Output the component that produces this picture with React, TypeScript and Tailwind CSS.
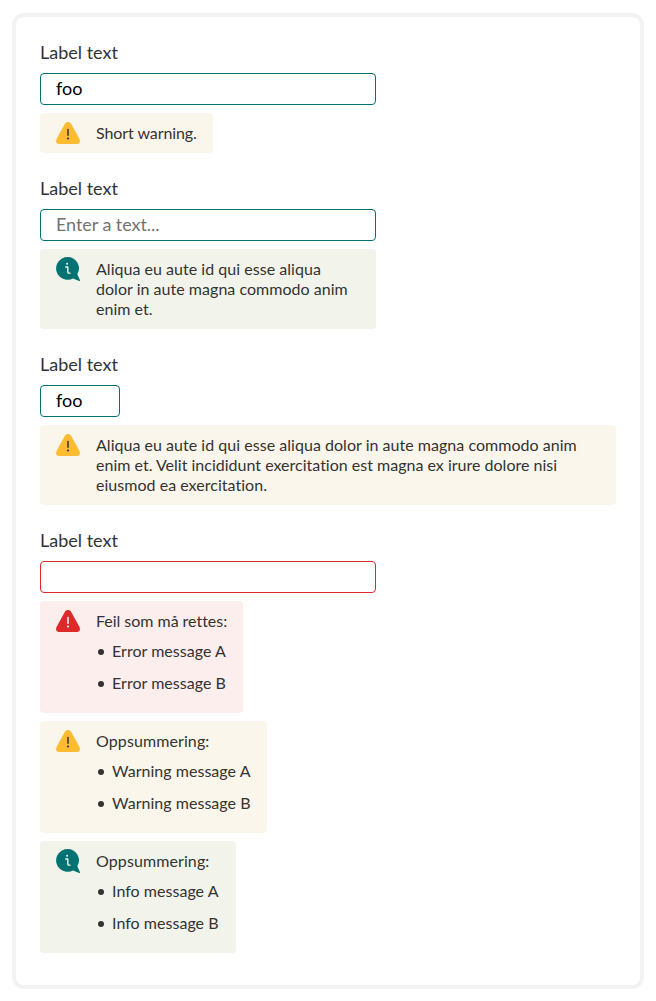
import type { ReactNode } from "react";

type Kind = "info" | "warning" | "error";

const boxColors: Record<Kind, string> = {
  info: "bg-[#f2f3eb]",
  warning: "bg-[#fbf6ec]",
  error: "bg-[#fdeeee]",
};

function TriangleIcon({ kind }: { kind: Kind }) {
  const error = kind === "error";
  const mark = error ? "#ffffff" : "#333333";
  return (
    <svg width="24" height="24" viewBox="0 0 24 24" className="shrink-0" aria-hidden="true">
      <path
        d="M8.8 2.9C10.3.4 13.7.4 15.2 2.9L23.5 18.1C24.6 20.4 23.6 23 21 23H3C.4 23-.6 20.4.5 18.1Z"
        fill={error ? "#dc2a2a" : "#fdbb31"}
      />
      <path d="M12 8.6V14.3" stroke={mark} strokeWidth="1.5" strokeLinecap="round" />
      <circle cx="12" cy="17.5" r="1.1" fill={mark} />
    </svg>
  );
}

function InfoIcon() {
  return (
    <svg width="24" height="24" viewBox="0 0 24 24" className="shrink-0" aria-hidden="true">
      <path
        d="M11.5 0A11.4 11.4 0 0 1 21.3 17.2L24 23.3Q24.1 24.2 23.2 24L17 21.4A11.4 11.4 0 1 1 11.5 0Z"
        fill="#007272"
      />
      <path d="M9.8 10H11.8V14.9Q11.8 16.2 13 16.2H14" fill="none" stroke="#fff" strokeWidth="1.3" strokeLinecap="round" strokeLinejoin="round" />
      <circle cx="11.1" cy="6.7" r="1" fill="#fff" />
    </svg>
  );
}

function FormStatus({ kind, width, children }: { kind: Kind; width: string; children: ReactNode }) {
  return (
    <div className={`mt-2 flex gap-4 rounded pl-4 ${boxColors[kind]} ${width}`}>
      <div className="pt-2">{kind === "info" ? <InfoIcon /> : <TriangleIcon kind={kind} />}</div>
      <div className="whitespace-nowrap py-[10px] text-base leading-5 tracking-[0.03px] text-[#333]">
        {children}
      </div>
    </div>
  );
}

function Summary({ title, items }: { title: ReactNode; items: string[] }) {
  return (
    <>
      <p>{title}</p>
      <ul className="mt-[10px] mb-[10px] flex flex-col gap-3">
        {items.map((item) => (
          <li key={item} className="flex items-center">
            <span className="mt-[2px] mr-2 ml-[2px] size-[6px] rounded-full bg-[#333]" />
            {item}
          </li>
        ))}
      </ul>
    </>
  );
}

function Field({
  value,
  placeholder,
  width = "w-[336px]",
  invalid = false,
  children,
}: {
  value?: string;
  placeholder?: string;
  width?: string;
  invalid?: boolean;
  children: ReactNode;
}) {
  return (
    <div>
      <label className="block text-lg leading-[22px] text-[#333]">
        Label text
        <input
          defaultValue={value}
          placeholder={placeholder}
          className={`mt-[10px] block h-8 rounded border bg-white px-[15px] pb-[2px] text-lg leading-6 text-black outline-none placeholder:tracking-[-0.06px] placeholder:text-[#737373] ${
            invalid ? "border-[#dc2a2a]" : "border-[#007272]"
          } ${width}`}
        />
      </label>
      {children}
    </div>
  );
}

export default function App() {
  return (
    <div className="px-3 pt-[13px] font-['Lato','Noto_Sans',sans-serif]">
      <main className="flex h-[976px] flex-col gap-6 rounded-xl border-4 border-[#f2f2f4] bg-white px-6 pt-6">
        <Field value="foo">
          <FormStatus kind="warning" width="w-[173px]">
            <span className="tracking-[-0.08px]">Short warning.</span>
          </FormStatus>
        </Field>
        <Field placeholder="Enter a text...">
          <FormStatus kind="info" width="w-[336px]">
            Aliqua eu aute id qui esse aliqua
            <br />
            dolor in aute magna commodo anim
            <br />
            enim et.
          </FormStatus>
        </Field>
        <Field value="foo" width="w-20">
          <FormStatus kind="warning" width="w-[576px]">
            Aliqua eu aute id qui esse aliqua dolor in aute magna commodo anim
            <br />
            <span className="tracking-[0.005px]">enim et. Velit incididunt exercitation est magna ex irure dolore nisi</span>
            <br />
            eiusmod ea exercitation.
          </FormStatus>
        </Field>
        <Field invalid>
          <FormStatus kind="error" width="w-[203px]">
            <Summary
              title={<span className="tracking-[-0.03px]">Feil som må rettes:</span>}
              items={["Error message A", "Error message B"]}
            />
          </FormStatus>
          <FormStatus kind="warning" width="w-[227px]">
            <Summary
              title={<span className="tracking-[0.1px]">Oppsummering:</span>}
              items={["Warning message A", "Warning message B"]}
            />
          </FormStatus>
          <FormStatus kind="info" width="w-[196px]">
            <Summary
              title={<span className="tracking-[0.1px]">Oppsummering:</span>}
              items={["Info message A", "Info message B"]}
            />
          </FormStatus>
        </Field>
      </main>
    </div>
  );
}
